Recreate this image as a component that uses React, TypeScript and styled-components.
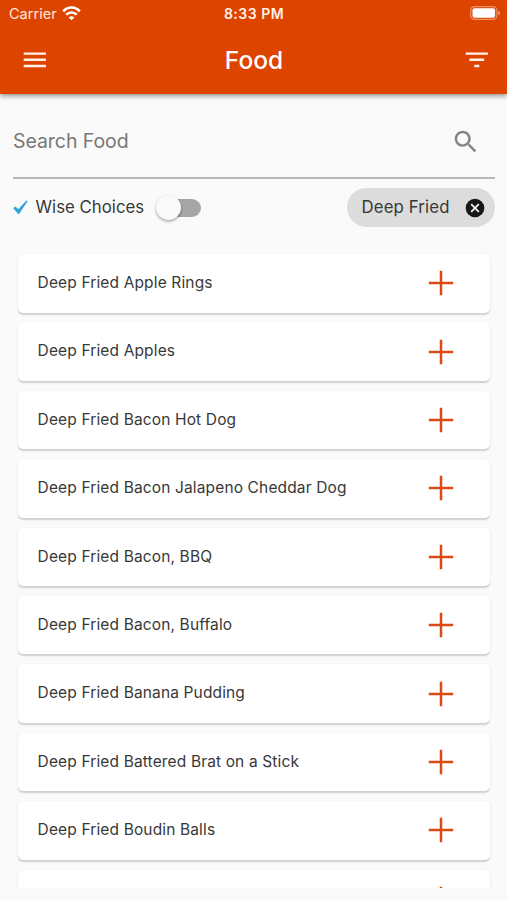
import React from "react";
import styled, { createGlobalStyle } from "styled-components";

const GlobalStyle = createGlobalStyle`
  *, *::before, *::after { box-sizing: border-box; }
  body { margin: 0; background: #fafafa; font-family: Inter, Roboto, sans-serif; }
`;

const Screen = styled.div`
  display: flex;
  flex-direction: column;
  width: 507px;
  height: 900px;
  overflow: hidden;
  background: #fafafa;
`;

const Header = styled.header`
  flex: none;
  height: 94px;
  background: #dd4400;
  color: #fff;
  box-shadow: 0 2px 5px rgba(0, 0, 0, 0.42);
`;

const StatusBar = styled.div`
  display: grid;
  grid-template-columns: 1fr auto 1fr;
  align-items: center;
  height: 26px;
  padding: 2px 6px 0 9px;
`;

const Carrier = styled.div`
  display: flex;
  align-items: center;
  gap: 5px;
  padding-bottom: 1px;
`;

const Clock = styled.time`
  margin-right: 2px;
  font-size: 14px;
  font-weight: 600;
  line-height: 1.2;
  letter-spacing: 0.5px;
  color: #fff0e8;
`;

const Battery = styled.div`
  display: flex;
  justify-content: flex-end;
  padding-bottom: 2px;
`;

const AppBar = styled.div`
  display: grid;
  grid-template-columns: 1fr auto 1fr;
  align-items: center;
  height: 68px;
  padding: 0 15px 0 20px;
`;

const Title = styled.h1`
  margin: 0 4px 0 0;
  padding-top: 1px;
  font-size: 24.5px;
  font-weight: 500;
  line-height: 1.2;
  color: #fff;
`;

const BarButton = styled.button<{ $end?: boolean }>`
  display: flex;
  justify-self: ${(p) => (p.$end ? "end" : "start")};
  padding: 0;
  border: 0;
  background: none;
  color: #fff2ea;
`;

const Label = styled.span<{ $size: number; $spacing?: number; $color?: string }>`
  font-size: ${(p) => p.$size}px;
  letter-spacing: ${(p) => p.$spacing ?? 0}px;
  color: ${(p) => p.$color ?? "#383838"};
  line-height: 1.2;
  white-space: nowrap;
`;

const SearchField = styled.div`
  display: flex;
  flex: none;
  align-items: center;
  justify-content: space-between;
  height: 85px;
  margin: 0 12px 0 13px;
  padding: 13px 14.5px 0 0;
  border-bottom: 2px solid #b8b8b8;
`;

const FilterRow = styled.div`
  display: flex;
  flex: none;
  align-items: center;
  height: 57px;
  padding: 0 12px 0 13px;
`;

const WiseLabel = styled.div`
  display: flex;
  align-items: center;
  gap: 7.5px;
`;

const Toggle = styled.button`
  display: flex;
  align-items: center;
  width: 41px;
  height: 18px;
  margin-left: 16px;
  padding: 0;
  border: 0;
  border-radius: 9px;
  background: #a6a6a6;
`;

const Thumb = styled.span`
  flex: none;
  width: 25px;
  height: 25px;
  margin-left: -4px;
  border-radius: 50%;
  background: #fafafa;
  box-shadow: 0 1.5px 3px rgba(0, 0, 0, 0.36);
`;

const Chip = styled.div`
  display: flex;
  align-items: center;
  justify-content: space-between;
  width: 148px;
  height: 39px;
  margin-left: auto;
  padding: 0 10px 0 14.5px;
  border-radius: 20px;
  background: #dcdcdc;
`;

const FoodList = styled.ul`
  display: flex;
  flex-direction: column;
  flex: none;
  gap: 9.9px;
  height: 652px;
  margin: 0;
  padding: 18px 17px 0 18px;
  overflow: hidden;
  list-style: none;
`;

const FoodCard = styled.li`
  display: flex;
  flex: none;
  align-items: center;
  justify-content: space-between;
  height: 58.5px;
  padding: 0 36px 0 19.6px;
  border-radius: 5px;
  background: #fff;
  box-shadow: 0 1.5px 1.5px rgba(0, 0, 0, 0.17), 0 0 2px rgba(0, 0, 0, 0.04);
`;

const AddButton = styled.button`
  display: flex;
  margin-left: auto;
  padding: 0;
  border: 0;
  background: none;
`;

const foods = [
  "Deep Fried Apple Rings",
  "Deep Fried Apples",
  "Deep Fried Bacon Hot Dog",
  "Deep Fried Bacon Jalapeno Cheddar Dog",
  "Deep Fried Bacon, BBQ",
  "Deep Fried Bacon, Buffalo",
  "Deep Fried Banana Pudding",
  "Deep Fried Battered Brat on a Stick",
  "Deep Fried Boudin Balls",
];

const MaterialIcon = ({ d, size = 29.6, color = "currentColor" }: { d: string; size?: number; color?: string }) => (
  <svg width={size} height={size} viewBox="0 0 24 24" fill={color}>
    <path d={d} />
  </svg>
);

const WifiIcon = () => (
  <svg width="19" height="15" viewBox="0 0 19 15" fill="none" stroke="#fff" strokeWidth="2.6">
    <path d="M1.2 5.3C6 .3 13 .3 17.8 5.3" />
    <path d="M4.2 8.7C7.2 5.7 11.8 5.7 14.8 8.7" />
    <path d="M9.5 14.3 6.7 11.5C8.3 9.8 10.7 9.8 12.3 11.5Z" fill="#fff" stroke="none" />
  </svg>
);

const BatteryIcon = () => (
  <svg width="31" height="14" viewBox="0 0 31 14">
    <rect x=".7" y=".6" width="26.2" height="12.8" rx="3.8" fill="none" stroke="#fff" strokeOpacity=".42" strokeWidth="1.2" />
    <rect x="2.5" y="2.3" width="22.6" height="9.4" rx="2" fill="#fff" />
    <path d="M28.3 4.7C30.6 5.5 30.6 8.5 28.3 9.3Z" fill="#fff" fillOpacity=".5" />
  </svg>
);

const PlusIcon = () => (
  <svg width="26" height="26" viewBox="0 0 26 26">
    <path d="M13 .8v24.4M.8 13h24.4" stroke="#dc4a14" strokeWidth="2.5" />
  </svg>
);

export default function App() {
  return (
    <>
      <GlobalStyle />
      <Screen>
        <Header>
          <StatusBar>
            <Carrier>
              <Label $size={14.5} $spacing={0.03} $color="#ffe9dd">Carrier</Label>
              <WifiIcon />
            </Carrier>
            <Clock>8:33 PM</Clock>
            <Battery>
              <BatteryIcon />
            </Battery>
          </StatusBar>
          <AppBar>
            <BarButton aria-label="Menu">
              <MaterialIcon d="M3 18h18v-2H3v2zm0-5h18v-2H3v2zm0-7v2h18V6H3z" />
            </BarButton>
            <Title>Food</Title>
            <BarButton $end aria-label="Filter">
              <MaterialIcon d="M10 18h4v-2h-4v2zM3 6v2h18V6H3zm3 7h12v-2H6v2z" />
            </BarButton>
          </AppBar>
        </Header>
        <SearchField>
          <Label $size={19.5} $spacing={-0.06} $color="#777">Search Food</Label>
          <MaterialIcon
            color="#858585"
            d="M15.5 14h-.79l-.28-.27C15.41 12.59 16 11.11 16 9.5 16 5.91 13.09 3 9.5 3S3 5.91 3 9.5 5.91 16 9.5 16c1.61 0 3.09-.59 4.23-1.57l.27.28v.79l5 4.99L20.49 19l-4.99-5zm-6 0C7.01 14 5 11.99 5 9.5S7.01 5 9.5 5 14 7.01 14 9.5 11.99 14 9.5 14z"
          />
        </SearchField>
        <FilterRow>
          <WiseLabel>
            <svg width="15" height="15" viewBox="0 0 15 15">
              <path d="M.2 8.3 2.4 6.4 5.3 9.2 13.4.5 14.6 1.3 5.7 14.4Z" fill="#2ba3dc" />
            </svg>
            <Label $size={16.8} $spacing={0.02}>Wise Choices</Label>
          </WiseLabel>
          <Toggle role="switch" aria-checked="false" aria-label="Wise Choices">
            <Thumb />
          </Toggle>
          <Chip>
            <Label $size={16.8} $spacing={0.13}>Deep Fried</Label>
            <svg width="20" height="20" viewBox="0 0 20 20">
              <circle cx="10" cy="10" r="9.3" fill="#171717" />
              <path d="m6.2 6.2 7.6 7.6m0-7.6-7.6 7.6" stroke="#eee" strokeWidth="1.9" />
            </svg>
          </Chip>
        </FilterRow>
        <FoodList>
          {foods.map((food) => (
            <FoodCard key={food}>
              <Label $size={15.5} $spacing={0.14}>{food}</Label>
              <AddButton aria-label={`Add ${food}`}>
                <PlusIcon />
              </AddButton>
            </FoodCard>
          ))}
          <FoodCard>
            <AddButton aria-label="Add">
              <PlusIcon />
            </AddButton>
          </FoodCard>
        </FoodList>
      </Screen>
    </>
  );
}
